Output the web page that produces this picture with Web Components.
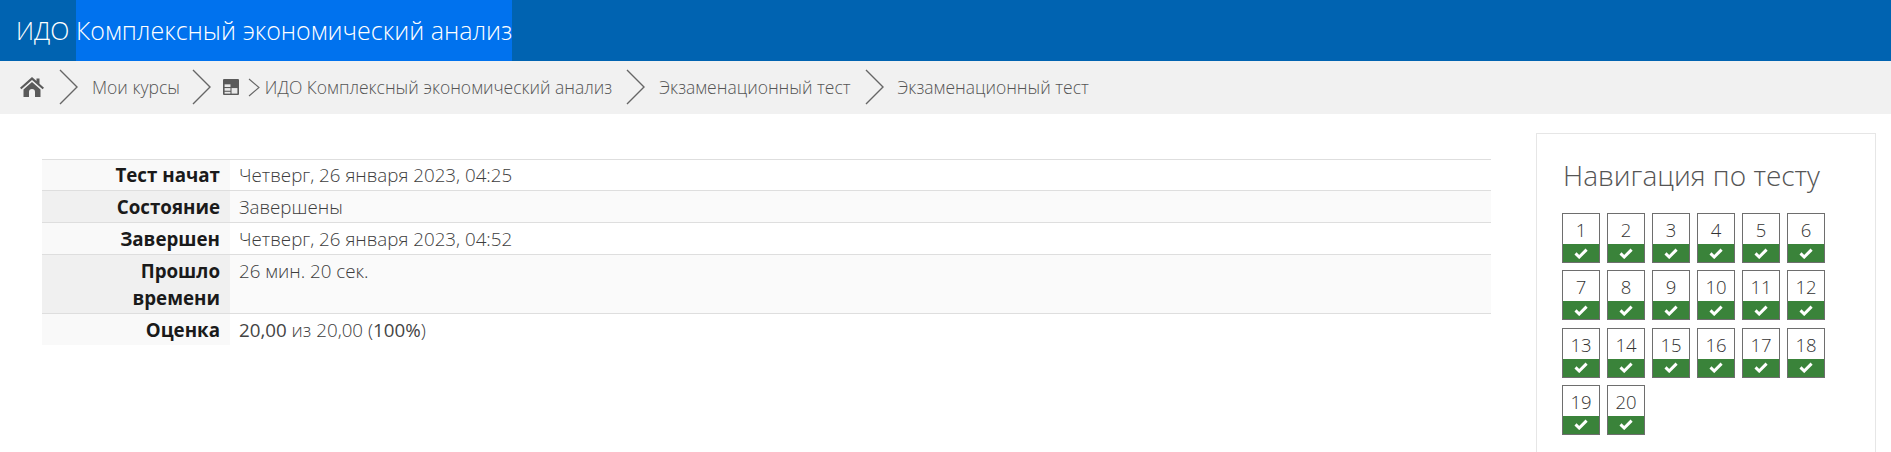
<!DOCTYPE html>
<html lang="ru">
<head>
<meta charset="utf-8">
<title>Экзаменационный тест</title>
<style>
  html, body { margin: 0; height: 452px; overflow: hidden; background: #fff; }
  body { font-family: "Open Sans", "Noto Sans", sans-serif; }
</style>
</head>
<body>
<course-header>
  <span slot="prefix">ИДО</span>
  <span>Комплексный экономический анализ</span>
</course-header>

<bread-crumbs>
  <crumb-item type="home"></crumb-item>
  <crumb-item>Мои курсы</crumb-item>
  <crumb-item type="course">ИДО Комплексный экономический анализ</crumb-item>
  <crumb-item>Экзаменационный тест</crumb-item>
  <crumb-item>Экзаменационный тест</crumb-item>
</bread-crumbs>

<page-body>
  <attempt-summary>
    <summary-row label="Тест начат">Четверг, 26 января 2023, 04:25</summary-row>
    <summary-row label="Состояние" shade>Завершены</summary-row>
    <summary-row label="Завершен">Четверг, 26 января 2023, 04:52</summary-row>
    <summary-row label="Прошло времени" shade>26 мин. 20 сек.</summary-row>
    <summary-row label="Оценка" last><b>20,00</b> из 20,00 (<b>100%</b>)</summary-row>
  </attempt-summary>
  <quiz-nav slot="side" heading="Навигация по тесту" count="20"></quiz-nav>
</page-body>

<script>
class CourseHeader extends HTMLElement {
  constructor() {
    super();
    this.attachShadow({ mode: 'open' }).innerHTML = `
      <style>
        :host {
          display: flex;
          height: 61px;
          background: #0063b1;
          color: #fff;
          font-size: 25px;
          font-weight: 300;
          line-height: 61px;
          padding-left: 16px;
          box-sizing: border-box;
        }
        .prefix { width: 60px; flex: none; }
        .name { background: #0072ee; }
      </style>
      <span class="prefix"><slot name="prefix"></slot></span>
      <span class="name"><slot></slot></span>
    `;
  }
}
customElements.define('course-header', CourseHeader);

class BreadCrumbs extends HTMLElement {
  constructor() {
    super();
    this.attachShadow({ mode: 'open' }).innerHTML = `
      <style>
        :host {
          display: flex;
          align-items: center;
          height: 53px;
          background: #f1f1f1;
          padding: 0 0 1px 20px;
          box-sizing: border-box;
        }
      </style>
      <slot></slot>
    `;
  }
}
customElements.define('bread-crumbs', BreadCrumbs);

class CrumbItem extends HTMLElement {
  constructor() {
    super();
    const type = this.getAttribute('type');
    let lead = '';
    if (type === 'home') {
      lead = `<svg class="home" width="24" height="20" viewBox="0 0 24 20">
        <path fill="#5a5a5a" d="M12 0 L16.5 4 V1.5 H19.5 V6.8 L24 10.8 L22.6 12.3 L12 3 L1.4 12.3 L0 10.8 Z"/>
        <path fill="#5a5a5a" d="M12 5 L20.5 12.4 V20 H15 V15 A3 3 0 0 0 9 15 V20 H3.5 V12.4 Z"/>
      </svg>`;
    }
    if (type === 'course') {
      lead = `<svg class="table" width="16" height="16" viewBox="0 0 15 15">
        <rect width="15" height="15" rx="1" fill="#5a5a5a"/>
        <rect x="1.5" y="5" width="5.5" height="2.5" fill="#e8e8e8"/>
        <rect x="1.5" y="8.5" width="5.5" height="2.5" fill="#e8e8e8"/>
        <rect x="1.5" y="12" width="5.5" height="1.7" fill="#e8e8e8"/>
        <rect x="8" y="8.5" width="5.5" height="5.2" fill="#e8e8e8"/>
      </svg>
      <svg class="small-sep" width="12" height="19" viewBox="0 0 12 19"><path d="M1 1 L11 9.5 L1 18" fill="none" stroke="#666" stroke-width="1.1"/></svg>`;
    }
    this.attachShadow({ mode: 'open' }).innerHTML = `
      <style>
        :host {
          display: flex;
          align-items: center;
          color: #555;
          font-size: 17.5px;
          font-weight: 300;
          white-space: nowrap;
        }
        .sep { margin: 0 14px; }
        .home { margin-right: 1px; }
        .table { margin-right: 9px; }
        .small-sep { margin-right: 5px; }
        :host([type="course"]) .sep { margin: 0 12px; }
      </style>
      ${type === 'home' ? '' : `<svg class="sep" width="19" height="36" viewBox="0 0 19 36"><path d="M1 1 L18 18 L1 35" fill="none" stroke="#666" stroke-width="1.4"/></svg>`}
      ${lead}<slot></slot>
    `;
  }
}
customElements.define('crumb-item', CrumbItem);

class PageBody extends HTMLElement {
  constructor() {
    super();
    this.attachShadow({ mode: 'open' }).innerHTML = `
      <style>
        :host {
          display: flex;
          align-items: flex-start;
          justify-content: space-between;
          padding: 18px 15px 0 42px;
        }
        .main { width: 1449px; padding-top: 27px; }
      </style>
      <div class="main"><slot></slot></div>
      <slot name="side"></slot>
    `;
  }
}
customElements.define('page-body', PageBody);

class AttemptSummary extends HTMLElement {
  constructor() {
    super();
    this.attachShadow({ mode: 'open' }).innerHTML = `
      <style>
        :host { display: block; border-top: 1px solid #dedede; }
      </style>
      <slot></slot>
    `;
  }
}
customElements.define('attempt-summary', AttemptSummary);

class SummaryRow extends HTMLElement {
  constructor() {
    super();
    this.attachShadow({ mode: 'open' }).innerHTML = `
      <style>
        :host {
          display: grid;
          grid-template-columns: 188px 1fr;
          border-bottom: 1px solid #dedede;
          background: #fff;
          font-size: 18.75px;
          line-height: 27px;
          color: #3d3d3d;
          font-weight: 300;
        }
        :host([last]) { border-bottom: 0; }
        :host([shade]) { background: #fafafa; }
        .label, .value { padding-top: 2px; padding-bottom: 2px; }
        :host(:first-child) .label, :host(:first-child) .value { padding-top: 1px; }
        .label {
          background: #f9f9f9;
          color: #1a1a1a;
          font-weight: 700;
          text-align: right;
          padding-left: 30px;
          padding-right: 10px;
        }
        :host([shade]) .label { background: #f0f0f0; }
        .value { padding-left: 9px; padding-right: 10px; }
        ::slotted(b) { font-weight: 400; color: #444; }
      </style>
      <div class="label"></div>
      <div class="value"><slot></slot></div>
    `;
    this.shadowRoot.querySelector('.label').textContent = this.getAttribute('label');
  }
}
customElements.define('summary-row', SummaryRow);

class QuizNav extends HTMLElement {
  constructor() {
    super();
    this.attachShadow({ mode: 'open' }).innerHTML = `
      <style>
        :host {
          display: block;
          width: 340px;
          height: 321px;
          margin-top: 1px;
          box-sizing: border-box;
          border: 1px solid #e6e6e6;
          border-bottom: 0;
          padding: 21px 0 0 25px;
        }
        h3 {
          margin: 0 0 18px 1px;
          font-size: 28px;
          line-height: 40px;
          font-weight: 300;
          color: #555;
        }
        .grid {
          display: grid;
          grid-template-columns: repeat(6, 38px);
          column-gap: 7px;
          row-gap: 7.33px;
        }
      </style>
      <h3></h3>
      <div class="grid"></div>
    `;
    this.shadowRoot.querySelector('h3').textContent = this.getAttribute('heading');
    const grid = this.shadowRoot.querySelector('.grid');
    const count = Number(this.getAttribute('count'));
    for (let i = 1; i <= count; i++) {
      const btn = document.createElement('nav-button');
      btn.textContent = i;
      grid.appendChild(btn);
    }
  }
}
customElements.define('quiz-nav', QuizNav);

class NavButton extends HTMLElement {
  constructor() {
    super();
    this.attachShadow({ mode: 'open' }).innerHTML = `
      <style>
        :host {
          display: flex;
          flex-direction: column;
          width: 38px;
          height: 50px;
          box-sizing: border-box;
          border: 1px solid #6e6e6e;
          background: #fff;
          color: #333;
          font-size: 18.5px;
          font-weight: 300;
          text-align: center;
        }
        .num { height: 30px; line-height: 31px; }
        .state {
          flex: 1;
          display: flex;
          align-items: center;
          justify-content: center;
          background: #3a833a;
        }
      </style>
      <div class="num"><slot></slot></div>
      <div class="state">
        <svg width="14" height="11" viewBox="0 0 14 11"><path d="M1.5 5.4 L5.2 9 L12.6 1.6" fill="none" stroke="#fff" stroke-width="3"/></svg>
      </div>
    `;
  }
}
customElements.define('nav-button', NavButton);
</script>
</body>
</html>
